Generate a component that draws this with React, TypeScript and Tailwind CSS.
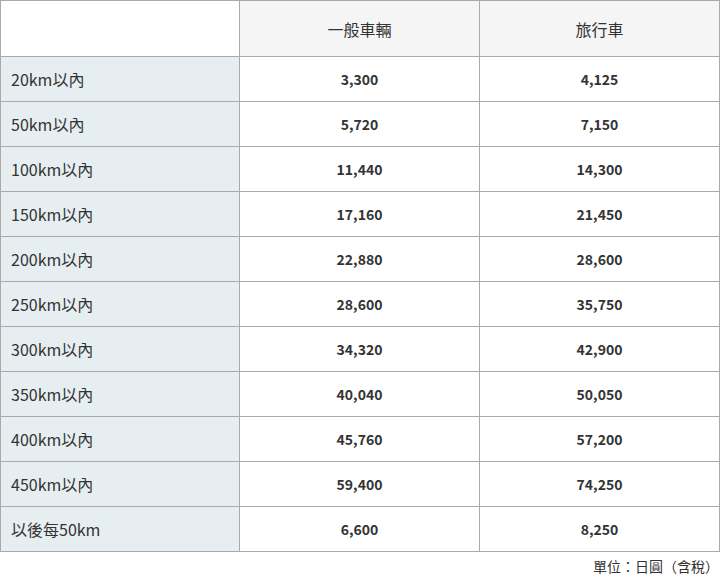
const rows: [string, string, string][] = [
  ['20km以內', '3,300', '4,125'],
  ['50km以內', '5,720', '7,150'],
  ['100km以內', '11,440', '14,300'],
  ['150km以內', '17,160', '21,450'],
  ['200km以內', '22,880', '28,600'],
  ['250km以內', '28,600', '35,750'],
  ['300km以內', '34,320', '42,900'],
  ['350km以內', '40,040', '50,050'],
  ['400km以內', '45,760', '57,200'],
  ['450km以內', '59,400', '74,250'],
  ['以後每50km', '6,600', '8,250'],
];

export default function App() {
  return (
    <div className="w-[720px] bg-white text-[#333] font-['Noto_Sans_CJK_TC','Noto_Sans',sans-serif]">
      <table className="w-full border-collapse table-fixed">
        <thead>
          <tr className="h-[56px]">
            <th className="border border-[#aaa] bg-white w-[239px]"></th>
            <th className="border border-[#aaa] bg-[#f5f5f5] text-[16px] font-normal w-[240px]">一般車輛</th>
            <th className="border border-[#aaa] bg-[#f5f5f5] text-[16px] font-normal">旅行車</th>
          </tr>
        </thead>
        <tbody>
          {rows.map(([label, a, b]) => (
            <tr key={label} className="h-[45px]">
              <td className="border border-[#aaa] bg-[#e6eef2] pl-[10px] text-[16px]">{label}</td>
              <td className="border border-[#aaa] text-center text-[14px] font-bold">{a}</td>
              <td className="border border-[#aaa] text-center text-[14px] font-bold">{b}</td>
            </tr>
          ))}
        </tbody>
      </table>
      <p className="text-right text-[14px] leading-[18px] pr-[1px] pt-[5px]">單位：日圓（含稅）</p>
    </div>
  );
}
